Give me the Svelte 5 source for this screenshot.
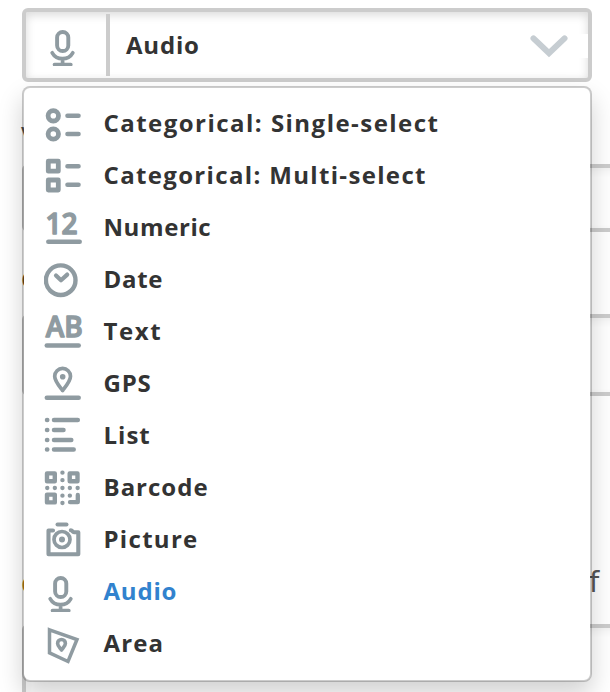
<script>
  const options = [
    { id: 'single', label: 'Categorical: Single-select', spacing: 1.47 },
    { id: 'multi', label: 'Categorical: Multi-select', spacing: 1.34 },
    { id: 'numeric', label: 'Numeric', spacing: 0.6 },
    { id: 'date', label: 'Date', spacing: 0.7 },
    { id: 'text', label: 'Text', spacing: 1.6 },
    { id: 'gps', label: 'GPS', spacing: 0.8 },
    { id: 'list', label: 'List', spacing: 1 },
    { id: 'barcode', label: 'Barcode', spacing: 1 },
    { id: 'picture', label: 'Picture', spacing: 1.3 },
    { id: 'audio', label: 'Audio', spacing: 0.8 },
    { id: 'area', label: 'Area', spacing: 1.1 }
  ];
  let selected = $state('audio');
  const current = $derived(options.find((o) => o.id === selected));
</script>

{#snippet icon(id)}
  <svg class="icon" width="40" height="52" viewBox="44 0 40 52">
    {#if id === 'single'}
      <circle cx="53.3" cy="17.8" r="5.2" stroke-width="4.8" />
      <circle cx="53.3" cy="36" r="5.2" stroke-width="4.8" />
      <path d="M67.5 17.8H78.5M67.5 36H78.5" stroke-width="4.6" />
    {:else if id === 'multi'}
      <path d="M48.3 11.2H58.3V21.2H48.3ZM48.3 30H58.3V40H48.3Z" stroke-width="4.8" />
      <path d="M67.5 16.3H78.5M67.5 34.8H78.5" stroke-width="4.6" />
    {:else if id === 'numeric'}
      <text x="45.5" y="31.6" textLength="32" lengthAdjust="spacingAndGlyphs">12</text>
      <path d="M48.3 39.7H79.7" stroke-width="4.5" />
    {:else if id === 'date'}
      <circle cx="60.7" cy="26.2" r="14.8" stroke-width="4.4" />
      <path d="M56 21.5L61 26.3L67.2 20.6" stroke-width="4.2" />
    {:else if id === 'text'}
      <text x="45.7" y="31.4" textLength="37" lengthAdjust="spacingAndGlyphs">AB</text>
      <path d="M46.8 39.4H78.7" stroke-width="4.5" />
    {:else if id === 'gps'}
      <path d="M62.6 32.5C58.5 27.2 54.7 23 54.7 18.3A7.9 7.9 0 0 1 70.5 18.3C70.5 23 66.7 27.2 62.6 32.5Z" stroke-width="3.7" />
      <circle class="solid" cx="62.7" cy="18.7" r="2.8" />
      <path d="M46.8 39.7H78.7" stroke-width="4.5" />
    {:else if id === 'list'}
      <path d="M47 10H47.3M54 10H77.8M47 20H47.3M54 20H63.5M47 30H47.3M54 30H71.3M47 39.4H47.3M54 39.4H73.7" stroke-width="4.5" />
    {:else if id === 'barcode'}
      <path d="M47 11.4H54.8V19.2H47ZM69.7 11.4H77.5V19.2H69.7ZM47 32.6H54.8V40.4H47Z" stroke-width="4.4" />
      <path d="M62.4 10.7h.1M62.4 18.2h.1M62.4 26h.1M62.4 33.7h.1M62.4 41h.1M47.2 26h.1M54.8 26h.1M69.8 26h.1M77.6 26h.1M69.8 33.7h.1M77.8 33V40.2H70" stroke-width="4.3" />
    {:else if id === 'picture'}
      <path d="M53 16.5H48.5V40.3H78.3V18.3H74C72.4 18.3 72.5 16.3 70.8 16.3" stroke-width="4.1" />
      <circle cx="62" cy="25.5" r="8" stroke-width="3.7" />
      <circle class="solid" cx="62" cy="25.5" r="3" />
      <path d="M57.5 10.4H66.5" stroke-width="4" />
    {:else if id === 'audio'}
      <rect x="55.1" y="12" width="11.2" height="19" rx="5.6" stroke-width="3.9" />
      <path d="M50.2 32.8C54.5 40.6 66.5 40.6 70.8 32.8M60.6 38.5V45M52.5 44.6H68.8" stroke-width="3.7" />
      <path class="clip" d="M48 47.5H74" />
    {:else if id === 'area'}
      <path d="M49.5 11.8L77 21.5L68 43.5L49.5 34.8Z" stroke-width="3.5" stroke-linejoin="miter" />
      <path d="M61.5 32C59.3 29 57.6 27.5 57.6 25.4A3.9 3.9 0 0 1 65.4 25.4C65.4 27.5 63.6 29 61.5 32Z" stroke-width="3.6" />
    {/if}
  </svg>
{/snippet}

<div class="page">
  <div class="select">
    <div class="chosen">{@render icon(current.id)}</div>
    <span class="value" style="letter-spacing: {current.spacing}px">{current.label}</span>
    <svg class="chevron" width="64" height="24" viewBox="0 0 64 24">
      <path d="M9.5 4.4L25 19.2L40.5 4.4" />
    </svg>
  </div>
  <div class="label first"><span>v</span></div>
  <div class="field one"></div>
  <div class="label second"><span class="brown">c</span></div>
  <div class="field two"></div>
  <div class="label third"><span class="amber">c</span><span class="end">f</span></div>
  <div class="field three"></div>

  <ul class="menu">
    {#each options as o (o.id)}
      <li>
        <button class:active={o.id === selected} onclick={() => (selected = o.id)}>
          {@render icon(o.id)}
          <span style="letter-spacing: {o.spacing}px">{o.label}</span>
        </button>
      </li>
    {/each}
  </ul>
</div>

<style>
  .page {
    position: relative;
    box-sizing: border-box;
    width: 610px;
    height: 692px;
    padding: 8px 0 0 22px;
    overflow: hidden;
    background: #fff;
    font-family: 'Trebuchet MS', 'Open Sans', sans-serif;
  }
  .select {
    box-sizing: border-box;
    display: flex;
    align-items: center;
    width: 570px;
    height: 74px;
    border: 4px solid #ccc;
    border-radius: 6px;
    box-shadow: inset 0 3px 10px rgba(0, 0, 0, 0.15);
    color: #333;
    font-size: 24px;
    font-weight: 700;
  }
  .chosen {
    box-sizing: border-box;
    display: flex;
    align-items: center;
    width: 84px;
    height: 62px;
    padding: 1px 0 0 20px;
    border-right: 4px solid #ccc;
  }
  .value {
    flex: 1;
    padding-left: 16px;
    line-height: 62px;
  }
  .chevron {
    margin-top: 2px;
    background: #fff;
    fill: none;
    stroke: #c6cdd2;
    stroke-width: 6;
    stroke-linecap: round;
  }
  .label {
    box-sizing: border-box;
    display: flex;
    color: #555;
    font-size: 29px;
    line-height: 40px;
  }
  .label span:first-child {
    width: 16px;
    margin-left: -1px;
  }
  .first { height: 82px; padding-top: 30px; }
  .second { height: 82px; padding-top: 25px; }
  .third { height: 228px; padding-top: 166px; }
  .brown { color: #6b4a1c; }
  .amber { color: #b87a10; }
  .end {
    margin-left: 552px;
    font-family: 'DejaVu Sans', sans-serif;
  }
  .field {
    box-sizing: border-box;
    width: 640px;
    border: 4px solid #ccc;
    border-radius: 6px;
    box-shadow: inset 0 3px 8px rgba(0, 0, 0, 0.06);
  }
  .one { height: 68px; }
  .two { height: 82px; }
  .three { height: 90px; }
  .menu {
    position: absolute;
    top: 86px;
    left: 22px;
    box-sizing: border-box;
    width: 570px;
    height: 596px;
    margin: 0;
    padding: 10px 0;
    list-style: none;
    background: #fff;
    background-clip: padding-box;
    border: 2px solid rgba(0, 0, 0, 0.2);
    border-radius: 8px;
    box-shadow: 0 12px 24px rgba(0, 0, 0, 0.18);
  }
  button {
    display: flex;
    align-items: center;
    width: 100%;
    height: 52px;
    padding: 0 0 0 20px;
    border: 0;
    background: none;
    color: #333;
    font: inherit;
    font-size: 24px;
    font-weight: 700;
    line-height: 50px;
    text-align: left;
  }
  button span { height: 52px; margin-left: 19.5px; }
  .active { color: #3182ce; }
  .icon {
    flex: none;
    fill: none;
    stroke: #8f9ba1;
    stroke-linecap: round;
    stroke-linejoin: round;
  }
  .icon text {
    fill: #8f9ba1;
    stroke-width: 1.4;
    font-family: 'Open Sans', sans-serif;
    font-size: 29px;
    font-weight: 600;
  }
  .icon .solid { fill: #8f9ba1; stroke: none; }
  .icon .clip { stroke: #fff; stroke-width: 3; stroke-linecap: butt; }
</style>
